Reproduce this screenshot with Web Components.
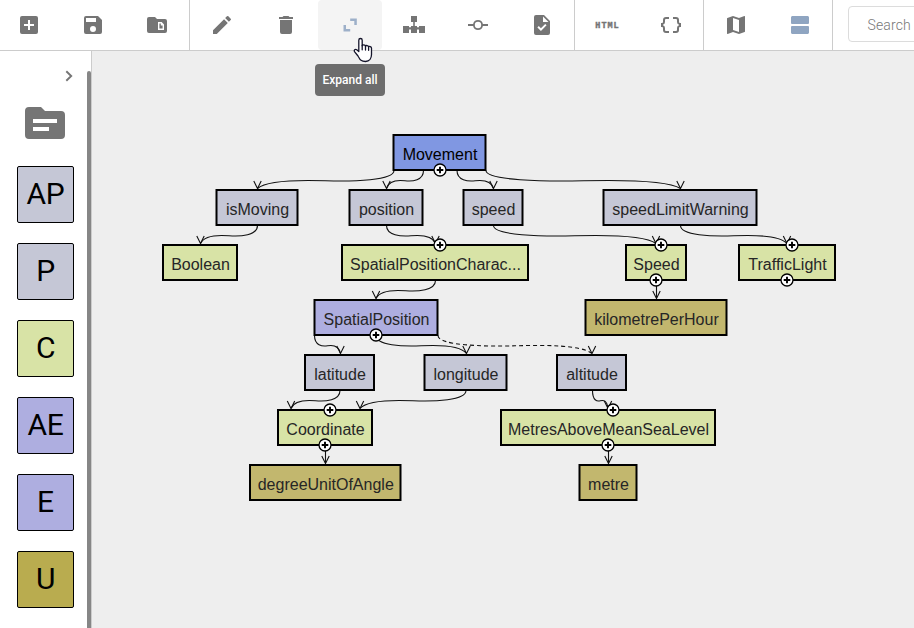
<!DOCTYPE html>
<html lang="en"><head><meta charset="utf-8"><title>Model editor</title>
<style>html,body{margin:0;height:100%;overflow:hidden;background:#fff}body{font-family:Roboto,sans-serif}</style></head>
<body><model-editor></model-editor>
<script>
const define=(name,html,setup)=>{
  const t=document.createElement('template');t.innerHTML=html;
  customElements.define(name,class extends HTMLElement{
    connectedCallback(){
      if(this.shadowRoot)return;
      this.attachShadow({mode:'open'}).append(t.content.cloneNode(true));
      if(setup)setup(this,this.shadowRoot);
    }
  });
};
const icons={
  add:'<path d="M19 3H5a2 2 0 0 0-2 2v14a2 2 0 0 0 2 2h14a2 2 0 0 0 2-2V5a2 2 0 0 0-2-2zm-2 10h-4v4h-2v-4H7v-2h4V7h2v4h4z"/>',
  save:'<path d="M17 3H5a2 2 0 0 0-2 2v14a2 2 0 0 0 2 2h14a2 2 0 0 0 2-2V7zm-5 16a3 3 0 1 1 0-6 3 3 0 0 1 0 6zm3-10H5V5h10z"/>',
  folder:'<path fill-rule="evenodd" d="M20 6h-8l-2-2H4a2 2 0 0 0-2 2v12a2 2 0 0 0 2 2h16a2 2 0 0 0 2-2V8a2 2 0 0 0-2-2zM13 9h3.7l2.3 2.4V17h-6zm1.4 1.4v5.2h3.2v-3.1h-1.8v-2.1z"/>',
  edit:'<path d="M3 17.25V21h3.75L17.81 9.94l-3.75-3.75zM20.71 7.04a1 1 0 0 0 0-1.41l-2.34-2.34a1 1 0 0 0-1.41 0l-1.83 1.83 3.75 3.75z"/>',
  trash:'<path d="M6 19a2 2 0 0 0 2 2h8a2 2 0 0 0 2-2V7H6zM19 4h-3.5l-1-1h-5l-1 1H5v2h14z"/>',
  expand:'<path d="M12.2 5.5h6.6V12h-2.5V8h-4.1zM5.5 12H8v4h4.2v2.5H5.5z"/>',
  tree:'<path d="M9 3h6v6h-2.2v4H15v1.3h2V13h6v7h-6v-3.4h-2V20H9v-3.4H7V20H1v-7h6v1.3h2V13h2.2V9H9z"/>',
  commit:'<path d="M16.9 11a5 5 0 0 0-9.8 0H2v2h5.1a5 5 0 0 0 9.8 0H22v-2zM12 15.2a3.2 3.2 0 1 1 0-6.4 3.2 3.2 0 0 1 0 6.4z"/>',
  task:'<path d="M14 2H6a2 2 0 0 0-2 2v16a2 2 0 0 0 2 2h12a2 2 0 0 0 2-2V8zm-3.06 16L7.4 14.46l1.41-1.41 2.12 2.12 4.24-4.24 1.41 1.41zM13 9V3.5L18.5 9z"/>',
  braces:'<path d="M4 7v2a1 1 0 0 1-1 1H2v4h1a1 1 0 0 1 1 1v2a3 3 0 0 0 3 3h3v-2H7a1 1 0 0 1-1-1v-2a3 3 0 0 0-2-2.83v-.34A3 3 0 0 0 6 9V7a1 1 0 0 1 1-1h3V4H7a3 3 0 0 0-3 3zM21 10a1 1 0 0 1-1-1V7a3 3 0 0 0-3-3h-3v2h3a1 1 0 0 1 1 1v2a3 3 0 0 0 2 2.83v.34A3 3 0 0 0 18 15v2a1 1 0 0 1-1 1h-3v2h3a3 3 0 0 0 3-3v-2a1 1 0 0 1 1-1h1v-4z"/>',
  map:'<path d="M20.5 3l-.16.03L15 5.1 9 3 3.36 4.9A.5.5 0 0 0 3 5.38V20.5c0 .28.22.5.5.5l.16-.03L9 18.9l6 2.1 5.64-1.9a.5.5 0 0 0 .36-.48V3.5a.5.5 0 0 0-.5-.5zM15 19l-6-2.11V5l6 2.11z"/>',
  rows:'<path d="M20 13H4a1 1 0 0 0-1 1v5.5C3 20.3 3.7 21 4.5 21h15c.8 0 1.5-.7 1.5-1.5V14a1 1 0 0 0-1-1zM19.5 3h-15C3.7 3 3 3.7 3 4.5V10a1 1 0 0 0 1 1h16a1 1 0 0 0 1-1V4.5C21 3.7 20.3 3 19.5 3z"/>',
  source:'<path d="M20 6h-8l-2-2H4a2 2 0 0 0-2 2v12a2 2 0 0 0 2 2h16a2 2 0 0 0 2-2V8a2 2 0 0 0-2-2zm-6 10H6v-2h8zm4-4H6v-2h12z"/>'
};
define('ui-icon',`<style>:host{display:block;width:24px;height:24px;fill:currentColor}svg{display:block;width:100%;height:100%}</style><svg viewBox="0 0 24 24"></svg>`,
 (h,r)=>r.querySelector('svg').innerHTML=icons[h.getAttribute('name')]);
define('tool-button',`<style>:host{display:flex;align-items:center;justify-content:center;width:64px;height:50px;border-radius:4px;color:#757575}:host([active]){color:#8fa5c1}:host([hover]){background:#f4f4f4;color:#9db0c9}</style><slot></slot>`);
define('tool-group',`<style>:host{display:flex;height:50px;border-right:1px solid #ccc}</style><slot></slot>`);
define('html-label',`<style>:host{display:block;font:700 8.5px/12px "Liberation Mono",monospace;letter-spacing:1px;margin:1px 0 0 1px;-webkit-text-stroke:.4px #757575}</style>HTML`);
define('search-box',`<style>:host{display:block;box-sizing:border-box;width:180px;height:36px;margin:6px 0 0 15px;border:1px solid #dcdcdc;border-radius:4px;padding-left:18.5px;font:300 14px/36px Roboto,sans-serif;letter-spacing:.15px;color:#777}</style><slot></slot>`);
define('tool-bar',`<style>:host{display:flex;flex:none;height:50px;border-bottom:1px solid #ccc;background:#fff;overflow:hidden}.lead{margin-left:-3px}tool-group{flex:none}search-box{flex:none}</style>
<tool-group class="lead"><tool-button><ui-icon name="add"></ui-icon></tool-button><tool-button><ui-icon name="save"></ui-icon></tool-button><tool-button><ui-icon name="folder"></ui-icon></tool-button></tool-group>
<tool-group><tool-button><ui-icon name="edit"></ui-icon></tool-button><tool-button><ui-icon name="trash"></ui-icon></tool-button><tool-button active hover><ui-icon name="expand"></ui-icon></tool-button><tool-button><ui-icon name="tree"></ui-icon></tool-button><tool-button><ui-icon name="commit"></ui-icon></tool-button><tool-button><ui-icon name="task"></ui-icon></tool-button></tool-group>
<tool-group><tool-button><html-label></html-label></tool-button><tool-button><ui-icon name="braces"></ui-icon></tool-button></tool-group>
<tool-group><tool-button><ui-icon name="map"></ui-icon></tool-button><tool-button active><ui-icon name="rows"></ui-icon></tool-button></tool-group>
<search-box>Search</search-box>`);
define('palette-tile',`<style>:host{display:block;box-sizing:border-box;width:57px;height:57px;border:1px solid #000;border-radius:2px;background:var(--fill);font:400 30px/53px Roboto,sans-serif;letter-spacing:-.3px;text-align:center;color:#000}</style><slot></slot>`);
define('side-palette',`<style>:host{display:flex;width:91px;flex:none;border-right:1px solid #ccc;background:#fff}
.list{width:87px;display:flex;flex-direction:column;flex:none}.chev{display:block;width:8px;height:12px;margin:19px 0 0 65px}ui-icon{width:48px;height:48px;margin:17px 0 0 21px;color:#757575}
.tiles{display:grid;gap:20px;margin:19px 0 0 17px}.bar{width:4px;margin-top:20px;background:#868686;border-radius:2px 2px 0 0}</style>
<div class="list"><svg class="chev" viewBox="0 0 8 12"><path d="M1.3 1.2 6.200 6l-4.900 4.800" fill="none" stroke="#757575" stroke-width="1.9"/></svg><ui-icon name="source"></ui-icon>
<div class="tiles"><palette-tile style="--fill:#c5c7d6">AP</palette-tile><palette-tile style="--fill:#c5c7d6">P</palette-tile><palette-tile style="--fill:#d8e3a6">C</palette-tile><palette-tile style="--fill:#aeaee0">AE</palette-tile><palette-tile style="--fill:#aeaee0">E</palette-tile><palette-tile style="--fill:#b9ac4f">U</palette-tile></div></div><div class="bar"></div>`);
// The frame is SVG so that half-pixel widths keep their soft edges.
define('graph-node',`<style>:host{position:absolute;height:37px;font:16px/41px "Liberation Sans",Arial,sans-serif;text-align:center;white-space:nowrap;color:#262626}
:host([kind=root]){--fill:#8097e2;color:#000}:host([kind=p]){--fill:#c5c7d6}:host([kind=c]){--fill:#d8e3a6}:host([kind=e]){--fill:#aeaee0}:host([kind=u]){--fill:#c2b76e}
svg{position:absolute;left:0;top:0;width:100%;height:37px;overflow:visible}rect{fill:var(--fill);stroke:#000;stroke-width:2}span{position:relative;left:.5px}</style><svg><rect x="1" y="1" height="35"/></svg><span><slot></slot></span>`,
 (h,r)=>{const b=r.querySelector('rect');b.setAttribute('x',1+ +h.dataset.shift);b.setAttribute('width',h.dataset.w-2);});
define('graph-port',`<style>:host{position:absolute;width:14px;height:14px}svg{display:block}</style><svg width="14" height="14" viewBox="-7 -7 14 14"><circle r="6" fill="#fff" stroke="#000" stroke-width="1.3"/><path d="M-3.3 0h6.6M0-3.3v6.6" stroke="#000" stroke-width="1.900"/></svg>`);
// x positions are window coordinates; the canvas origin is (92, 51).
const nodes=[['Movement','root',392.5,486.5,0],['isMoving','p',215.5,298.5,1],['position','p',348.5,423.5,1],['speed','p',462.5,523.5,1],['speedLimitWarning','p',602.5,757.5,1],['Boolean','c',162,238,2],['SpatialPositionCharac...','c',341,529,2],['Speed','c',625,687,2],['TrafficLight','c',738,836,2],['SpatialPosition','e',313.5,438.5,3],['kilometrePerHour','u',584.5,727.5,3],['latitude','p',304,375,4],['longitude','p',423.5,507.5,4],['altitude','p',556,627,4],['Coordinate','c',277,373,5],['MetresAboveMeanSeaLevel','c',500,716,5],['degreeUnitOfAngle','u',249,401.5,6],['metre','u',578.5,637.5,6]];
const edges=[[394,257.5,0],[423.5,386.5,0],[457,493.5,0],[486,680.5,0],[257.5,200.5,1],[386.5,435.5,1],[493.5,656,1],[680.5,787,1],[435.5,376,2],[656.5,656.5,2],[314.5,340.5,3],[376,466.5,3],[438,592,3,1],[340,291,4],[466,360,4],[592.5,608,4],[325.5,325.5,5],[608.5,608.5,5]];
const ports=[[440,170],[440,245],[661,245],[656,280],[792,245],[787,280],[376,335],[330,410],[325,445],[613,410],[608,445]];
define('graph-canvas',`<style>:host{display:block;position:relative;flex:1;background:#eee;overflow:hidden}.edges{display:block}</style><svg class="edges" width="822" height="577" viewBox="92 51 822 577" fill="none" stroke="#111" stroke-width="1.1"></svg>`,(h,r)=>{
  r.querySelector('svg').innerHTML=edges.map(([a,b,row,dash])=>{
    const y=170.5+row*55,e=y+18,d=b-a,m=a+d/2;
    const line=d?`M${a} ${y}C${a} ${y+10} ${a+d*.3} ${y+11.2} ${m} ${y+10.3}C${b-d*.3} ${y+9.4} ${b-d*.07} ${y+9.5} ${b} ${e}`:`M${a} ${y}V${e}`;
    return `<path d="${line}" ${dash?'stroke-dasharray="4 3"':''}/><path d="M${b-3.7} ${e-7.5}L${b} ${e}L${b+3.7} ${e-7.5}"/>`;
  }).join('');
  for(const [t,k,x1,x2,row] of nodes){const n=document.createElement('graph-node'),x=Math.floor(x1);n.setAttribute('kind',k);n.dataset.w=x2-x1;n.dataset.shift=x1-x;n.textContent=t;n.style.cssText=`left:${x-92}px;width:${x2-x1+(x1-x)*2}px;top:${83+row*55}px`;r.append(n);}
  for(const [x,y] of ports){const p=document.createElement('graph-port');p.style.cssText=`left:${x-99}px;top:${y-58}px`;r.append(p);}
});
define('tool-tip',`<style>:host{position:absolute;left:315px;top:64px;width:70px;height:32px;border-radius:4px;background:#6d6d6d;color:#fff;font:500 12px/32px Roboto,sans-serif;text-align:center;white-space:nowrap}</style><slot></slot>`);
define('hand-pointer',`<style>:host{position:absolute;left:352.5px;top:37px}svg{display:block}</style><svg width="20" height="26" viewBox="0 0 20 26"><path d="M5.8 14.5V3.200a1.7 1.7 0 0 1 3.4 0v5.6c.4-1.5 3-1.300 3.3.3.5-1 2.8-.7 3.1.7.7-.7 2.900-.4 2.900 1.5v6.3c0 3.5-2 6.900-6 6.900-5.300 0-5.600-2.5-7.5-5.5l-3.300-4.200c-1.200-1.700.6-3 2-2z" fill="#fff" stroke="#14142a" stroke-width="1.3" stroke-linejoin="round"/><path d="M9.2 8.5v4.3M12.5 9.2v3.9M15.6 10v3.300" stroke="#14142a" stroke-width="1.3" stroke-linecap="round"/></svg>`);
define('model-editor',`<style>:host{display:flex;flex-direction:column;height:100vh;position:relative;overflow:hidden}main{display:flex;flex:1;min-height:0;overflow:hidden}</style><tool-bar></tool-bar><main><side-palette></side-palette><graph-canvas></graph-canvas></main><tool-tip>Expand all</tool-tip><hand-pointer></hand-pointer>`);
</script></body></html>
